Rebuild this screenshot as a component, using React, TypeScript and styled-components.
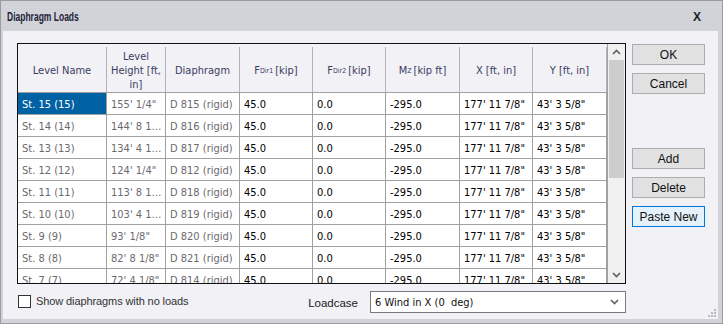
import React from 'react';
import styled, { createGlobalStyle } from 'styled-components';

const GlobalStyle = createGlobalStyle`
  html, body {
    margin: 0;
    padding: 0;
    background: #fff;
  }
  * {
    box-sizing: border-box;
  }
`;

type Row = {
  name: string;
  height: string;
  diaphragm: string;
};

const rows: Row[] = [
  { name: 'St. 15 (15)', height: '155\' 1/4"', diaphragm: 'D 815 (rigid)' },
  { name: 'St. 14 (14)', height: '144\' 8 1/8"', diaphragm: 'D 816 (rigid)' },
  { name: 'St. 13 (13)', height: '134\' 4 1/8"', diaphragm: 'D 817 (rigid)' },
  { name: 'St. 12 (12)', height: '124\' 1/4"', diaphragm: 'D 812 (rigid)' },
  { name: 'St. 11 (11)', height: '113\' 8 1/8"', diaphragm: 'D 818 (rigid)' },
  { name: 'St. 10 (10)', height: '103\' 4 1/8"', diaphragm: 'D 819 (rigid)' },
  { name: 'St. 9 (9)', height: '93\' 1/8"', diaphragm: 'D 820 (rigid)' },
  { name: 'St. 8 (8)', height: '82\' 8 1/8"', diaphragm: 'D 821 (rigid)' },
  { name: 'St. 7 (7)', height: '72\' 4 1/8"', diaphragm: 'D 814 (rigid)' }
];

const COLS = '89px 59px 74px 73px 73px 74px 73px 74px';

const Chevron = ({ up }: { up?: boolean }) => (
  <svg width="9" height="6" viewBox="0 0 9 6">
    <path
      d={up ? 'M1 5 L4.5 1.5 L8 5' : 'M1 1 L4.5 4.5 L8 1'}
      fill="none"
      stroke="#606060"
      strokeWidth="1.6"
    />
  </svg>
);

export default function App() {
  return (
    <>
      <GlobalStyle />
      <Window>
        <TitleBar>
          <Title>Diaphragm Loads</Title>
          <Close>X</Close>
        </TitleBar>
        <Body>
          <Main>
            <GridFrame>
              <GridView>
                <HeaderRow>
                  <HeadCell>Level Name</HeadCell>
                  <HeadCell>Level Height [ft, in]</HeadCell>
                  <HeadCell>Diaphragm</HeadCell>
                  <HeadCell>F<Sub>Dir1</Sub> [kip]</HeadCell>
                  <HeadCell>F<Sub>Dir2</Sub> [kip]</HeadCell>
                  <HeadCell>M<Sub>Z</Sub> [kip ft]</HeadCell>
                  <HeadCell>X [ft, in]</HeadCell>
                  <HeadCell>Y [ft, in]</HeadCell>
                </HeaderRow>
                {rows.map((r, i) => (
                  <DataRow key={r.name}>
                    <Cell readOnly selected={i === 0}>{r.name}</Cell>
                    <Cell readOnly>{r.height}</Cell>
                    <Cell readOnly>{r.diaphragm}</Cell>
                    <Cell>45.0</Cell>
                    <Cell>0.0</Cell>
                    <Cell>-295.0</Cell>
                    <Cell>177' 11 7/8"</Cell>
                    <Cell>43' 3 5/8"</Cell>
                  </DataRow>
                ))}
              </GridView>
              <ScrollBar>
                <ScrollArrow><Chevron up /></ScrollArrow>
                <Track>
                  <Thumb />
                </Track>
                <ScrollArrow><Chevron /></ScrollArrow>
              </ScrollBar>
            </GridFrame>
            <ButtonColumn>
              <Button>OK</Button>
              <Button>Cancel</Button>
              <Spacer />
              <Button>Add</Button>
              <Button>Delete</Button>
              <Button focused>Paste New</Button>
            </ButtonColumn>
          </Main>
          <Footer>
            <CheckLabel>
              <CheckBox />
              Show diaphragms with no loads
            </CheckLabel>
            <LoadcaseGroup>
              <FieldLabel>Loadcase</FieldLabel>
              <Select>
                <span>6 Wind in X (0&nbsp; deg)</span>
                <Chevron />
              </Select>
            </LoadcaseGroup>
          </Footer>
          <Grip>
            <svg width="8" height="8" viewBox="0 0 8 8">
              {[[6, 0], [6, 3], [3, 3], [6, 6], [3, 6], [0, 6]].map(([x, y]) => (
                <rect key={`${x}-${y}`} x={x} y={y} width="2" height="2" fill="#b8b8c0" />
              ))}
            </svg>
          </Grip>
        </Body>
      </Window>
    </>
  );
}

const Window = styled.div`
  width: 723px;
  height: 324px;
  display: flex;
  flex-direction: column;
  background: #d1d3d8;
  border: 1px solid #9a9ba2;
  padding: 0 4px 4px 2px;
  font-family: 'DejaVu Sans Condensed', 'DejaVu Sans', sans-serif;
`;

const TitleBar = styled.div`
  height: 30px;
  display: flex;
  align-items: center;
  justify-content: space-between;
  padding: 1px 0 0 4px;
`;

const Title = styled.div`
  font-family: 'Liberation Sans', sans-serif;
  font-weight: bold;
  font-size: 12.5px;
  color: #1e2438;
  transform: scaleX(0.68);
  transform-origin: left center;
`;

const Close = styled.div`
  font-family: 'Liberation Sans', sans-serif;
  font-weight: bold;
  font-size: 12px;
  color: #222;
  margin-right: 17px;
`;

const Body = styled.div`
  position: relative;
  flex: 1;
  background: #f1f1f6;
  padding: 12px 12px 0 14px;
  display: flex;
  flex-direction: column;
`;

const Main = styled.div`
  display: flex;
  gap: 6px;
`;

const GridFrame = styled.div`
  width: 609px;
  height: 241px;
  border: 1px solid #111;
  display: flex;
  background: #fff;
`;

const GridView = styled.div`
  flex: 1;
  overflow: hidden;
`;

const HeaderRow = styled.div`
  display: grid;
  grid-template-columns: ${COLS};
  height: 49px;
  background: #f1f1f6;
  border-bottom: 1px solid #a0a0a0;
`;

const HeadCell = styled.div`
  display: flex;
  align-items: center;
  justify-content: center;
  text-align: center;
  padding: 2px 3px 0;
  margin-top: 3px;
  border-right: 1px solid #b4b4b8;
  font-size: 11px;
  line-height: 14px;
  color: #3a3c62;
`;

const Sub = styled.sub`
  font-size: 7px;
  vertical-align: -2px;
  line-height: 0;
  margin-right: 2px;
`;

const DataRow = styled.div`
  display: grid;
  grid-template-columns: ${COLS};
  height: 22px;
`;

const Cell = styled.div<{ readOnly?: boolean; selected?: boolean }>`
  display: block;
  padding: 1px 2px 0 4px;
  border-right: 1px solid #a0a0a0;
  border-bottom: 1px solid #a0a0a0;
  font-size: 11px;
  line-height: 21px;
  white-space: nowrap;
  overflow: hidden;
  text-overflow: ellipsis;
  color: ${p => (p.selected ? '#fff' : p.readOnly ? '#6a6a6e' : '#000')};
  background: ${p => (p.selected ? '#0061a3' : '#fff')};
`;

const ScrollBar = styled.div`
  width: 18px;
  display: flex;
  flex-direction: column;
  background: #f0f0f0;
  border-left: 1px solid #a0a0a0;
`;

const ScrollArrow = styled.div`
  height: 16px;
  display: flex;
  align-items: center;
  justify-content: center;
`;

const Track = styled.div`
  flex: 1;
  padding: 0 1px;
`;

const Thumb = styled.div`
  height: 118px;
  background: #cdcdcd;
`;

const ButtonColumn = styled.div`
  width: 73px;
  display: flex;
  flex-direction: column;
  gap: 8px;
  padding-top: 1px;
`;

const Spacer = styled.div`
  height: 38px;
`;

const Button = styled.div<{ focused?: boolean }>`
  height: 21px;
  display: flex;
  align-items: center;
  justify-content: center;
  font-family: 'Liberation Sans', sans-serif;
  font-size: 12px;
  color: #111;
  background: ${p => (p.focused ? '#e5f1fb' : '#e1e1e1')};
  border: 1px solid ${p => (p.focused ? '#0078d7' : '#adadad')};
`;

const Footer = styled.div`
  width: 609px;
  display: flex;
  align-items: center;
  justify-content: space-between;
  margin-top: 7px;
`;

const CheckLabel = styled.label`
  display: flex;
  align-items: center;
  gap: 5px;
  margin-left: 1px;
  margin-bottom: 2px;
  font-family: 'Liberation Sans', sans-serif;
  font-size: 11px;
  letter-spacing: -0.1px;
  color: #333;
`;

const CheckBox = styled.span`
  width: 13px;
  height: 13px;
  border: 1px solid #333;
  background: #fff;
`;

const LoadcaseGroup = styled.div`
  display: flex;
  align-items: center;
  gap: 12px;
`;

const FieldLabel = styled.span`
  font-family: 'Liberation Sans', sans-serif;
  font-size: 11.5px;
  color: #222;
  margin-top: 2px;
`;

const Select = styled.div`
  width: 256px;
  height: 22px;
  border: 1px solid #7a7a7a;
  background: #fff;
  display: flex;
  align-items: center;
  justify-content: space-between;
  padding: 0 6px 0 4px;
  font-size: 11px;
  color: #111;
`;

const Grip = styled.div`
  position: absolute;
  right: 2px;
  bottom: 2px;
  display: flex;
`;
